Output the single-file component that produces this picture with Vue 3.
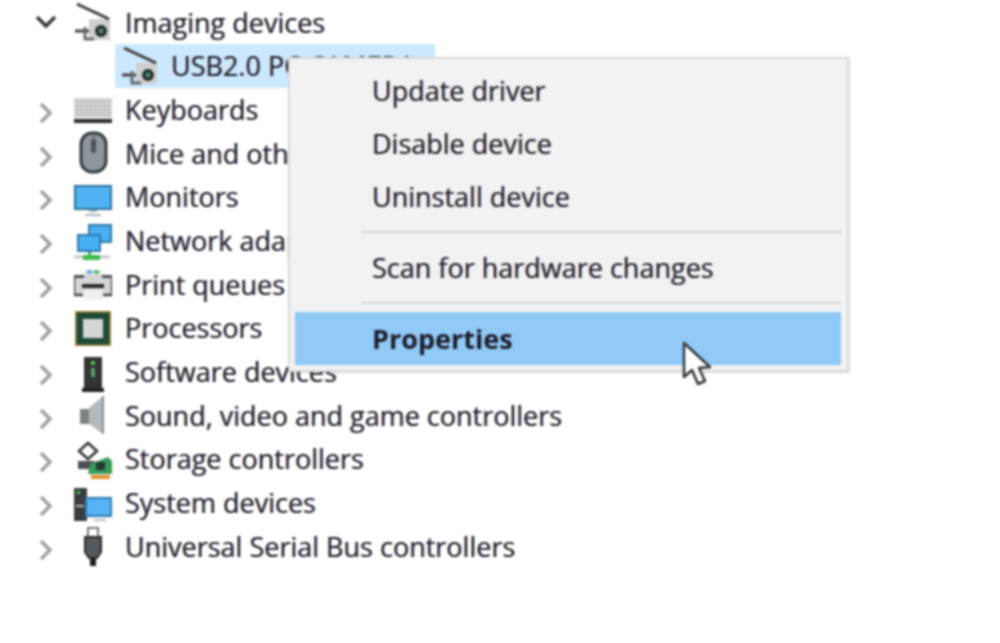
<template>
  <div class="page">
    <div class="tree">
      <div class="row" v-for="row in rows" :key="row.name" :class="{ child: row.child }">
        <svg v-if="!row.child" class="chev" :class="{ open: row.open }" viewBox="0 0 20 20">
          <path v-if="row.open" d="M1 5 L10 14 L19 5" />
          <path v-else d="M5 1 L14 10 L5 19" />
        </svg>
        <div class="label-wrap">
          <svg class="icon" viewBox="0 0 38 44">
            <g v-if="row.icon === 'camera'">
              <rect x="15" y="19" width="21" height="21" fill="#cfcfcf" />
              <path d="M3 4 L35 19" stroke="#3c3c3c" stroke-width="3" />
              <path d="M1 31 H15" stroke="#444" stroke-width="3" />
              <path d="M11 27 V39 H20" stroke="#6a6a6a" stroke-width="3" fill="none" />
              <circle cx="27" cy="31" r="6" fill="#243030" />
              <circle cx="27" cy="31" r="2.5" fill="#5c8a78" />
            </g>
            <g v-if="row.icon === 'keyboard'">
              <rect x="0" y="10" width="38" height="20" fill="#d4d4d4" />
              <path d="M2 14 H36 M2 18 H36 M2 22 H36 M2 26 H36" stroke="#b0b0b0" stroke-width="1.5" stroke-dasharray="3 1.5" />
              <rect x="0" y="31" width="38" height="4" fill="#2b2b2b" />
            </g>
            <g v-if="row.icon === 'mouse'">
              <rect x="7" y="2" width="25" height="39" rx="11" fill="#8f979c" stroke="#343a3e" stroke-width="3" />
              <rect x="17" y="8" width="5" height="14" rx="2.5" fill="#4c5357" />
              <path d="M19.500 2 V20" stroke="#555" stroke-width="1" />
            </g>
            <g v-if="row.icon === 'monitor'">
              <rect x="0" y="10" width="38" height="25" fill="#2e6f9c" />
              <rect x="2" y="12" width="34" height="21" fill="#4fb2f2" />
              <path d="M15 36 H23" stroke="#aab4ba" stroke-width="2" />
              <path d="M11 40 H27" stroke="#aab4ba" stroke-width="2" />
            </g>
            <g v-if="row.icon === 'network'">
              <rect x="14" y="5" width="24" height="19" fill="#2e78ad" />
              <rect x="16" y="7" width="20" height="15" fill="#4aaef0" />
              <rect x="3" y="15" width="24" height="18" fill="#2e78ad" />
              <rect x="5" y="17" width="20" height="14" fill="#45b0f5" />
              <rect x="14" y="33" width="3" height="4" fill="#3cb04a" />
              <rect x="9" y="36" width="17" height="5" fill="#3dbb52" />
              <path d="M0 38 H9 M26 38 H36" stroke="#c8c8c8" stroke-width="3" />
            </g>
            <g v-if="row.icon === 'printer'">
              <rect x="10" y="8" width="18" height="9" fill="#e8e8e8" />
              <path d="M13 10 H18" stroke="#3f9fe0" stroke-width="3" />
              <path d="M20 10 H25" stroke="#45b35c" stroke-width="3" />
              <rect x="0" y="13" width="38" height="19" fill="#d4d6d8" />
              <rect x="0" y="13" width="10" height="3" fill="#4c5054" />
              <rect x="28" y="13" width="10" height="3" fill="#4c5054" />
              <rect x="8" y="22" width="22" height="4" fill="#2a2a2a" />
              <path d="M0 16 V33 H38 V16" fill="none" stroke="#42464a" stroke-width="2.500" />
              <rect x="9" y="28" width="20" height="10" fill="#f0f0f0" />
            </g>
            <g v-if="row.icon === 'cpu'">
              <rect x="1" y="5" width="36" height="35" fill="#a88b3a" />
              <rect x="2.500" y="6.500" width="33" height="32" fill="#1f4a38" />
              <rect x="9" y="13" width="20" height="19" fill="#d6d6d6" />
            </g>
            <g v-if="row.icon === 'tower'">
              <rect x="10" y="7" width="18" height="31" fill="#333" />
              <rect x="17" y="11" width="4" height="4" fill="#4fbf5c" />
              <rect x="17" y="18" width="4" height="9" fill="#5e9e6a" />
              <rect x="8" y="38" width="22" height="4" fill="#222" />
            </g>
            <g v-if="row.icon === 'speaker'">
              <rect x="6" y="16" width="9" height="15" fill="#7c8184" />
              <path d="M15 15 L29 3 V41 L15 31 Z" fill="#b6b9bb" />
              <path d="M29 3 V41" stroke="#8a8e90" stroke-width="2" />
            </g>
            <g v-if="row.icon === 'storage'">
              <path d="M14 6 L23 14 L14 22 L5 14 Z" fill="#fff" stroke="#333" stroke-width="2.500" />
              <rect x="4" y="24" width="17" height="8" fill="#4a4f52" />
              <path d="M14 37 L16 27 L34 20 L38 24 V37 Z" fill="#3a9a58" />
              <rect x="22" y="25" width="9" height="8" fill="#1d3d30" />
              <rect x="17" y="38" width="19" height="4" fill="#e0922a" />
            </g>
            <g v-if="row.icon === 'system'">
              <rect x="0" y="7" width="13" height="33" fill="#3a3d3f" />
              <rect x="3" y="10" width="3" height="3" fill="#4fbf5c" />
              <rect x="2" y="24" width="8" height="2" fill="#b5b5b5" />
              <rect x="11" y="16" width="27" height="20" fill="#2d77ad" />
              <rect x="13" y="18" width="23" height="16" fill="#56b4f5" />
              <path d="M20 39 H32" stroke="#b4bcc2" stroke-width="2" />
            </g>
            <g v-if="row.icon === 'usb'">
              <rect x="14" y="4" width="10" height="9" fill="#fff" stroke="#777" stroke-width="2" />
              <path d="M11 13 H27 V28 L23 34 H15 L11 28 Z" fill="#55595c" stroke="#2a2a2a" stroke-width="2" />
              <rect x="16" y="34" width="6" height="8" fill="#1e1e1e" />
            </g>
          </svg>
          <span class="label">{{ row.name }}</span>
        </div>
      </div>
    </div>

    <div class="menu">
      <div class="item">Update driver</div>
      <div class="item">Disable device</div>
      <div class="item">Uninstall device</div>
      <div class="sep"></div>
      <div class="item">Scan for hardware changes</div>
      <div class="sep"></div>
      <div class="item active">Properties</div>
    </div>

    <svg class="cursor" viewBox="0 0 32 48">
      <path d="M2 2 V36 L10 29 L16 43 L23 40 L17 27 L28 26 Z" fill="#fff" stroke="#33383c" stroke-width="2.500" stroke-linejoin="round" />
    </svg>
  </div>
</template>

<script setup>
const rows = [
  { name: "Imaging devices", icon: "camera", open: true },
  { name: "USB2.0 PC CAMERA", icon: "camera", child: true },
  { name: "Keyboards", icon: "keyboard" },
  { name: "Mice and other pointing devices", icon: "mouse" },
  { name: "Monitors", icon: "monitor" },
  { name: "Network adapters", icon: "network" },
  { name: "Print queues", icon: "printer" },
  { name: "Processors", icon: "cpu" },
  { name: "Software devices", icon: "tower" },
  { name: "Sound, video and game controllers", icon: "speaker" },
  { name: "Storage controllers", icon: "storage" },
  { name: "System devices", icon: "system" },
  { name: "Universal Serial Bus controllers", icon: "usb" },
];
</script>

<style>
html,
body {
  margin: 0;
  background: #fff;
}
</style>

<style scoped>
.page {
  position: relative;
  width: 1000px;
  height: 643px;
  overflow: hidden;
  background: #fff;
  font-family: "Open Sans", "Noto Sans", sans-serif;
  font-size: 27px;
  color: #1d1d2a;
  filter: blur(0.9px);
}

.tree {
  padding: 0.5px 0 0 36px;
}

.row {
  display: flex;
  align-items: center;
  height: 43.67px;
}

.row.child {
  padding-left: 79px;
}

.chev {
  width: 20px;
  height: 20px;
  flex: none;
  margin: 7px 18px 0 0;
  fill: none;
  stroke: #a0a0a0;
  stroke-width: 3.5;
}

.chev.open {
  margin-top: 0;
  stroke: #3a3a3a;
}

.label-wrap {
  display: flex;
  align-items: center;
  gap: 13px;
  height: 100%;
}

.child .label-wrap {
  width: 320px;
  padding-left: 6px;
  gap: 12px;
  box-sizing: border-box;
  background: #cce8ff;
}

.icon {
  width: 38px;
  height: 44px;
  flex: none;
}

.label {
  white-space: nowrap;
  text-shadow: 1px 0 rgba(70, 110, 190, 0.35), -1px 0 rgba(210, 130, 50, 0.35);
}

.menu {
  position: absolute;
  left: 288px;
  top: 57px;
  width: 561px;
  height: 315px;
  box-sizing: border-box;
  padding: 5px 6px 6px 5px;
  background: #f2f2f2;
  border: 2px solid #d8d8d8;
  box-shadow: 1px 1px 2px rgba(0, 0, 0, 0.12);
}

.item {
  height: 53px;
  display: flex;
  align-items: center;
  padding-left: 77px;
  white-space: nowrap;
  text-shadow: 1px 0 rgba(70, 110, 190, 0.35), -1px 0 rgba(210, 130, 50, 0.35);
}

.sep {
  height: 2px;
  margin: 8px 0 8px 66px;
  background: #d6d6d6;
}

.item.active {
  background: #91c9f7;
  font-weight: 700;
  text-shadow: none;
}

.cursor {
  position: absolute;
  left: 682px;
  top: 341px;
  width: 32px;
  height: 48px;
}
</style>
